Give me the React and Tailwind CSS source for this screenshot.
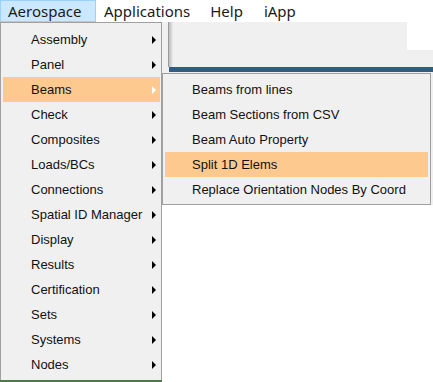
import React from 'react';

const mainItems = [
  'Assembly', 'Panel', 'Beams', 'Check', 'Composites', 'Loads/BCs', 'Connections',
  'Spatial ID Manager', 'Display', 'Results', 'Certification', 'Sets', 'Systems', 'Nodes'
];

const beamItems = [
  'Beams from lines', 'Beam Sections from CSV', 'Beam Auto Property',
  'Split 1D Elems', 'Replace Orientation Nodes By Coord'
];

const Arrow = ({ white }) => (
  <span
    className={`w-0 h-0 border-y-[4px] border-y-transparent border-l-[4px] ${white ? 'border-l-white' : 'border-l-black'}`}
  />
);

const App = () => {
  return (
    <div className="relative w-[433px] h-[382px] overflow-hidden bg-white font-['Liberation_Sans',Arial,sans-serif] text-[13px] text-[#111]">
      {/* Menu bar */}
      <div className="flex h-[22px] items-center bg-white font-['Noto_Sans',sans-serif] text-[15px] text-[#1a1a1a]">
        <div className="flex h-[22px] w-[96px] items-center border border-[#99d1ff] bg-[#cce8ff] pl-[7px]">Aerospace</div>
        <div className="ml-[8px]">Applications</div>
        <div className="ml-[20px]">Help</div>
        <div className="ml-[21px]">iApp</div>
      </div>

      {/* Background window */}
      <div className="flex h-[28px]">
        <div className="flex-1 bg-[#f0f0f0]" />
        <div className="w-[26px] bg-white" />
      </div>
      <div className="h-[17px] bg-[#f0f0f0]" />
      <div className="flex h-[5px] bg-[#f0f0f0]">
        <div className="ml-[169px] flex-1 bg-[#2f5b86]" />
      </div>
      <div className="h-[133px] bg-[#f0f0f0]" />

      {/* toolbar edge beside the menu */}
      <div className="absolute left-[161px] top-[22px] h-[45px] w-[12px] bg-[#f0f0f0]">
        <div className="flex h-full">
          <div className="w-[7px] bg-[#f0f0f0]" />
          <div className="w-[1px] bg-[#9a9a9a]" />
          <div className="w-[4px] bg-gradient-to-r from-[#bdbdbd] to-[#ececec]" />
        </div>
      </div>

      {/* Aerospace dropdown */}
      <div className="absolute left-0 top-[22px] w-[162px] h-[359px] border border-[#a0a0a0] bg-[#f0f0f0] py-[4px] pl-[2px] pr-[1px]">
        {mainItems.map((item) => {
          const active = item === 'Beams';
          return (
            <div
              key={item}
              className={`flex h-[25px] items-center justify-between pl-[28px] pr-[4px] ${active ? 'bg-[#fec98f]' : ''}`}
            >
              <span>{item}</span>
              <Arrow white={active} />
            </div>
          );
        })}
      </div>

      {/* Beams submenu */}
      <div className="absolute left-[162px] top-[73px] w-[269px] h-[132px] border border-[#a0a0a0] bg-[#f0f0f0] py-[3px] px-[2px]">
        {beamItems.map((item) => (
          <div
            key={item}
            className={`flex h-[25px] items-center pl-[27px] ${item === 'Split 1D Elems' ? 'bg-[#fec98f]' : ''}`}
          >
            {item}
          </div>
        ))}
      </div>

      <div className="absolute left-0 top-[380px] h-[2px] w-[162px] bg-[#4a7a4a]" />
    </div>
  );
};

export default App;
